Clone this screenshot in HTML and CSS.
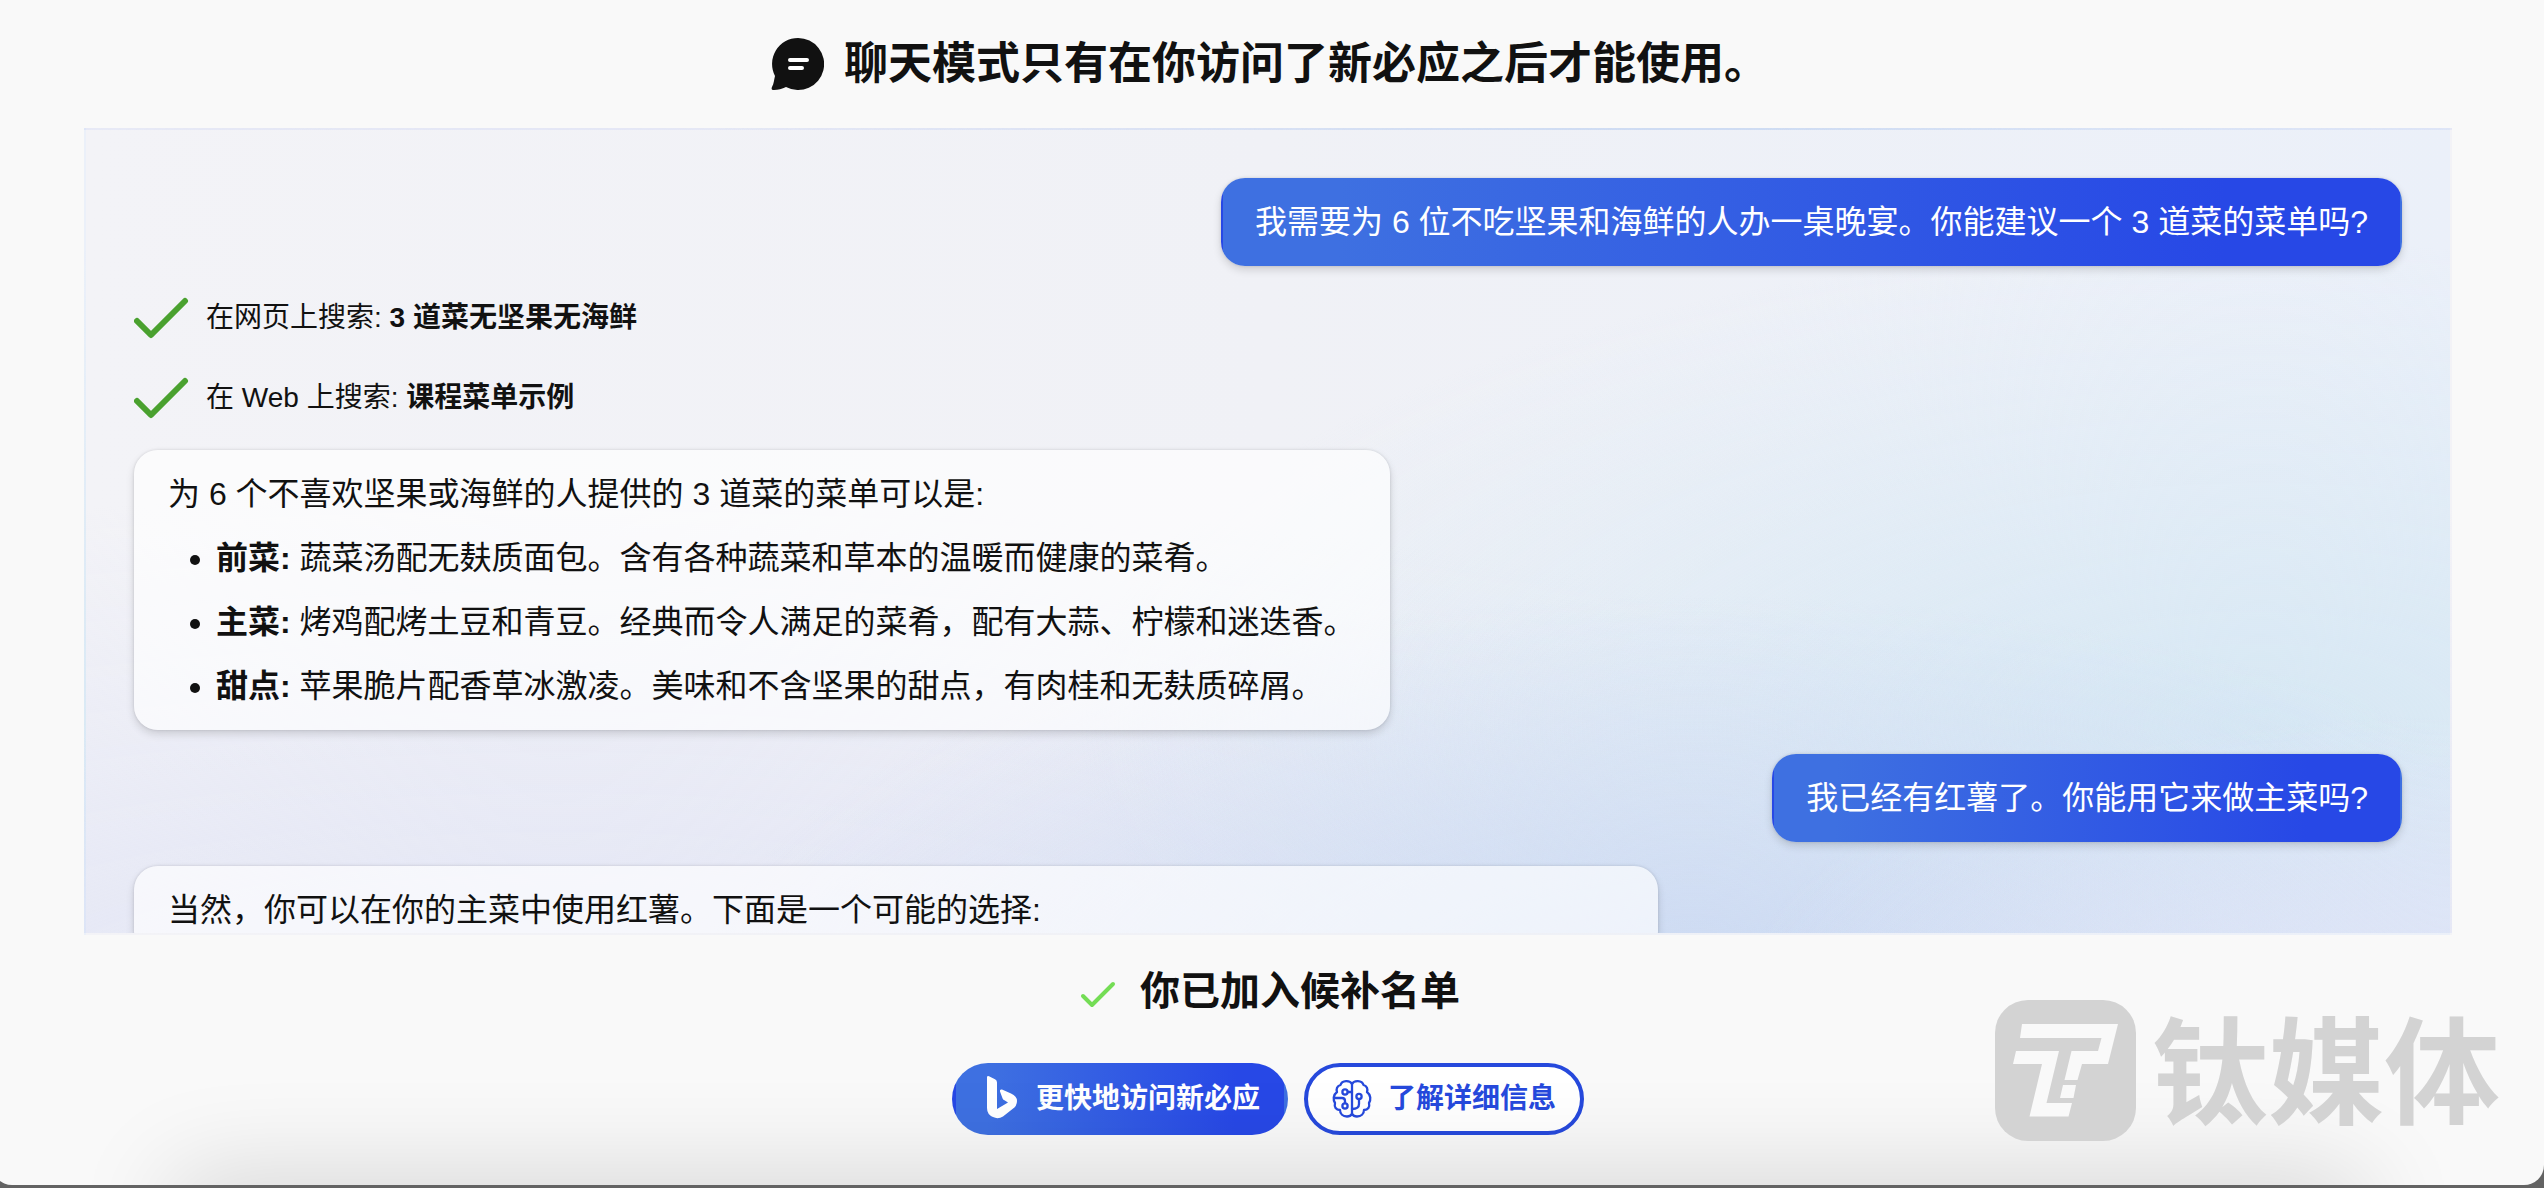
FILE: index.html
```html
<!DOCTYPE html>
<html lang="zh-CN">
<head>
    <meta charset="UTF-8">
    <meta name="viewport" content="width=device-width, initial-scale=1.0">
    <title>新必应</title>
    <link rel="stylesheet" href="styles.css">
</head>
<body>
    <main class="page">
        <header class="page-header">
            <svg class="chat-icon" viewBox="0 0 56 56" aria-hidden="true">
                <path d="M30 2a26 26 0 1 1-12 49c-4 2-8 3-12 3-2 0-3-1-2-3 2-4 2-7 3-11A26 26 0 0 1 30 2z" fill="#111"/>
                <path d="M22 24h17M22 32h12" stroke="#fff" stroke-width="4" stroke-linecap="round"/>
            </svg>
            <h1>聊天模式只有在你访问了新必应之后才能使用。</h1>
        </header>

        <section class="chat">
            <p class="bubble user">我需要为 6 位不吃坚果和海鲜的人办一桌晚宴。你能建议一个 3 道菜的菜单吗?</p>
            <div class="search">
                <svg class="search-icon" viewBox="0 0 56 56" aria-hidden="true"><path d="M3 31l14 14 34-34"/></svg>
                <p>在网页上搜索: <strong>3 道菜无坚果无海鲜</strong></p>
            </div>
            <div class="search">
                <svg class="search-icon" viewBox="0 0 56 56" aria-hidden="true"><path d="M3 31l14 14 34-34"/></svg>
                <p>在 Web 上搜索: <strong>课程菜单示例</strong></p>
            </div>
            <div class="bubble bot">
                <p>为 6 个不喜欢坚果或海鲜的人提供的 3 道菜的菜单可以是:</p>
                <ul>
                    <li><strong>前菜:</strong> 蔬菜汤配无麸质面包。含有各种蔬菜和草本的温暖而健康的菜肴。</li>
                    <li><strong>主菜:</strong> 烤鸡配烤土豆和青豆。经典而令人满足的菜肴，配有大蒜、柠檬和迷迭香。</li>
                    <li><strong>甜点:</strong> 苹果脆片配香草冰激凌。美味和不含坚果的甜点，有肉桂和无麸质碎屑。</li>
                </ul>
            </div>
            <p class="bubble user">我已经有红薯了。你能用它来做主菜吗?</p>
            <div class="bubble bot wide">
                <p>当然，你可以在你的主菜中使用红薯。下面是一个可能的选择:</p>
            </div>
        </section>

        <footer class="waitlist">
            <div class="waitlist-status">
                <svg class="status-icon" viewBox="0 0 40 40" aria-hidden="true"><path d="M7 25l9 9 21-21"/></svg>
                <h2>你已加入候补名单</h2>
            </div>
            <div class="actions">
                <button type="button" class="btn primary">
                    <svg viewBox="0 0 48 48" aria-hidden="true">
                        <path fill="#fff" d="M11 2.500q0-2 2-1.300l6 3q2 1 2 3.300V34l11-6.500-4-2.500q-1-.5-1.400-1.500l-2.600-7q-.6-2.500 2-2l9 4q6 2.500 6 7.500 0 5-4.500 8L27 41.500q-5 3-10 .5-6-2.500-6-9z"/>
                    </svg>
                    更快地访问新必应
                </button>
                <button type="button" class="btn outline">
                    <svg viewBox="0 0 48 48" aria-hidden="true">
                        <g transform="translate(4 4)" fill="none" stroke="#2649dc" stroke-width="2.300" stroke-linecap="round" stroke-linejoin="round">
                            <path d="M20 5c-2-4-10-4-11.500 1C5 7 4 10 5 13c-4 3-4 8-2 11-1 4 1 7 5 7 0 4 3 6.500 7 6.500 2 0 4-1 5-2.500z"/>
                            <path d="M20 5c2-4 10-4 11.500 1C35 7 36 10 35 13c4 3 4 8 2 11 1 4-1 7-5 7 0 4-3 6.500-7 6.500-2 0-4-1-5-2.500"/>
                            <circle cx="13" cy="13" r="2.600"/>
                            <circle cx="13" cy="27" r="2.600"/>
                            <circle cx="27" cy="17.500" r="2.600"/>
                            <path d="M16 13h4M3 19h7q3 0 3 3v2M27 20v5q0 5-7 5"/>
                        </g>
                    </svg>
                    了解详细信息
                </button>
            </div>
        </footer>

        <div class="watermark">
            <svg viewBox="0 0 141 141" aria-hidden="true">
                <rect width="141" height="141" rx="33" fill="#d3d3d3"/>
                <g fill="#f9f9f9">
                    <path d="M27 24h96l-10 40H87l-4.500 16h-13l7-29H103l3.500-13H25z"/>
                    <path d="M21 51h43l-12.500 52H77l-3.500 13.500h-39l12.500-52.500H18z"/>
                    <path d="M68 85h13l-2.500 13H65z"/>
                </g>
            </svg>
            <span>钛媒体</span>
        </div>
    </main>
</body>
</html>
```

FILE: styles.css
```css
* {
    box-sizing: border-box;
}
body {
    margin: 0;
    padding-bottom: 3px;
    height: 100vh;
    overflow: hidden;
    background: #636363;
    color: #111;
    font-family: "Liberation Sans", "Noto Sans CJK SC", sans-serif;
}
h1, h2, p, ul {
    margin: 0;
}
.page {
    position: relative;
    display: flex;
    flex-direction: column;
    height: 100%;
    margin-left: -8px;
    padding: 0 92px;
    overflow: hidden;
    background: #f9f9f9;
    border-radius: 0 0 20px 20px;
}
/* soft shadow rising from the bottom edge */
.page::after {
    content: "";
    position: absolute;
    left: 190px;
    right: 190px;
    top: 100%;
    height: 80px;
    box-shadow: 0 0 100px 8px rgba(0, 0, 0, 0.15);
}
.page-header {
    display: flex;
    justify-content: center;
    align-items: center;
    gap: 20px;
    height: 128px;
    flex-shrink: 0;
}
.chat-icon {
    width: 56px;
    height: 56px;
}
h1 {
    font-size: 44px;
    line-height: 56px;
}
.chat {
    flex: 1;
    min-height: 0;
    display: flex;
    flex-direction: column;
    gap: 24px;
    padding: 48px;
    overflow: hidden;
    border: 2px solid transparent;
    background-image:
        radial-gradient(ellipse 30% 35% at 100% 108%, rgba(222, 228, 247, 1), rgba(222, 228, 247, 0)),
        radial-gradient(ellipse 42% 50% at 68% 108%, rgba(200, 215, 242, 0.9), rgba(200, 215, 242, 0)),
        radial-gradient(ellipse 50% 60% at 92% 74%, rgba(215, 232, 244, 1), rgba(215, 232, 244, 0)),
        radial-gradient(ellipse 80% 65% at 20% 110%, rgba(226, 229, 245, 1), rgba(228, 229, 246, 0)),
        linear-gradient(90deg, #f3f3f7, #f0f1f6 50%, #ebf0f9);
}
.bubble {
    flex-shrink: 0;
    max-width: 100%;
    border: 2px solid transparent;
    border-radius: 24px;
    font-size: 32px;
    line-height: 40px;
    box-shadow: 0 4px 8px rgba(0, 0, 0, 0.14), 0 0 3px rgba(0, 0, 0, 0.12);
}
.user {
    align-self: flex-end;
    padding: 22px 32px;
    color: #fff;
    background-image: linear-gradient(92deg, #3e70e1 10%, #2748e6 85%);
}
.bot {
    align-self: flex-start;
    padding: 10px 32px;
    line-height: 64px;
    background-color: rgba(255, 255, 255, 0.65);
}
.wide {
    width: 1524px;
}
.bot ul {
    padding-left: 48px;
}
.search {
    display: flex;
    align-items: center;
    gap: 16px;
    flex-shrink: 0;
    font-size: 28px;
    line-height: 40px;
}
.search-icon {
    width: 56px;
    height: 56px;
}
.search-icon path, .status-icon path {
    fill: none;
    stroke: #4aa12f;
    stroke-width: 6;
    stroke-linecap: round;
    stroke-linejoin: round;
}
.waitlist {
    flex-shrink: 0;
    display: flex;
    flex-direction: column;
    align-items: center;
    gap: 44px;
    padding: 28px 0 50px;
}
.waitlist-status {
    display: flex;
    align-items: center;
    gap: 24px;
}
.status-icon {
    width: 40px;
    height: 40px;
}
.status-icon path {
    stroke: #74dd55;
    stroke-width: 4;
}
h2 {
    font-size: 40px;
    line-height: 56px;
}
.actions {
    display: flex;
    gap: 16px;
}
.btn {
    display: flex;
    align-items: center;
    gap: 12px;
    height: 72px;
    padding: 0 24px 0 20px;
    border: 4px solid transparent;
    border-radius: 36px;
    font-family: inherit;
    font-size: 28px;
    font-weight: bold;
    line-height: 40px;
    cursor: pointer;
}
.btn svg {
    width: 48px;
    height: 48px;
}
.primary {
    color: #fff;
    background-image: linear-gradient(92deg, #3e70e1 10%, #2748e6 85%);
}
.outline {
    color: #2649dc;
    background: #fff;
    border-color: #2649dc;
}
.watermark {
    position: absolute;
    z-index: 1;
    right: 44px;
    bottom: 39px;
    display: flex;
    align-items: center;
    gap: 16px;
    color: #d3d3d3;
    font-size: 116px;
    font-weight: bold;
    line-height: 141px;
    pointer-events: none;
}
.watermark svg {
    width: 141px;
    height: 141px;
}
.watermark span {
    padding-top: 10px;
}
```
